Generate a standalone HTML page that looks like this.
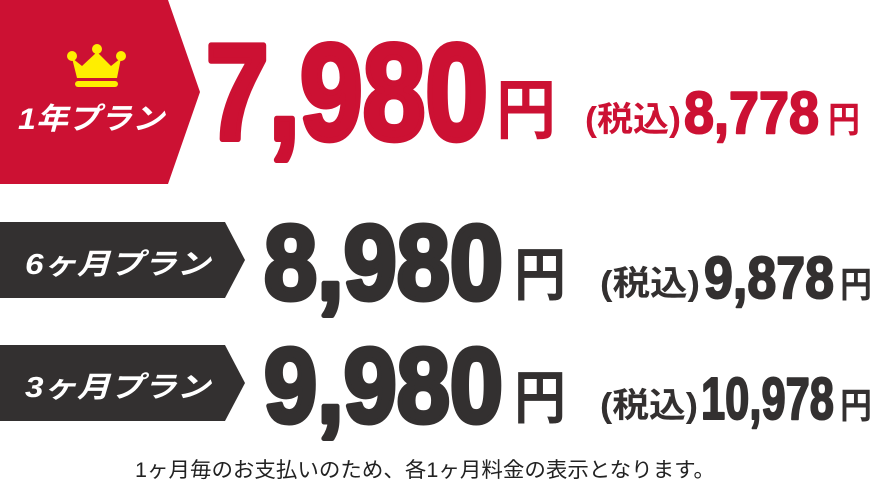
<!DOCTYPE html>
<html><head><meta charset="utf-8"><style>
html,body{margin:0;padding:0;background:#fff;}
svg{display:block}
</style></head><body>
<svg width="880" height="500" viewBox="0 0 880 500" xmlns="http://www.w3.org/2000/svg">
<polygon points="0,0 168,0 200,92 168,184 0,184" fill="#cc1133"/>
<g fill="#ffee00">
<circle cx="72" cy="56" r="5"/><circle cx="97" cy="49" r="5"/><circle cx="121" cy="56" r="5"/>
<polygon points="72,58 82,66 97,52 111,66 121,58 117,78 77,78"/>
<rect x="75" y="81" width="43" height="6" rx="3"/>
</g>
<polygon points="0,222 225,222 245,260 225,298 0,298" fill="#333030"/>
<polygon points="0,345 225,345 245,383 225,421 0,421" fill="#333030"/>
<g font-family="Liberation Sans, Noto Sans CJK JP, sans-serif" font-style="italic" font-weight="bold" fill="#fff">
<text x="18" y="129" font-size="30" textLength="146" lengthAdjust="spacingAndGlyphs">1年プラン</text>
<text x="25" y="274" font-size="29" textLength="185" lengthAdjust="spacingAndGlyphs">6ヶ月プラン</text>
<text x="25" y="397" font-size="29" textLength="185" lengthAdjust="spacingAndGlyphs">3ヶ月プラン</text>
</g>
<g font-family="Liberation Sans, sans-serif" font-weight="bold" stroke-linejoin="round">
<text x="206" y="139" font-size="136" fill="#cc1133" stroke="#cc1133" stroke-width="6" textLength="282" lengthAdjust="spacingAndGlyphs">7,980</text>
<text x="264" y="299" font-size="106" fill="#333030" stroke="#333030" stroke-width="5" textLength="239" lengthAdjust="spacingAndGlyphs">8,980</text>
<text x="264" y="422" font-size="106" fill="#333030" stroke="#333030" stroke-width="5" textLength="239" lengthAdjust="spacingAndGlyphs">9,980</text>
<text x="684" y="133" font-size="59" fill="#cc1133" stroke="#cc1133" stroke-width="2" textLength="135" lengthAdjust="spacingAndGlyphs">8,778</text>
<text x="704" y="298" font-size="59" fill="#333030" stroke="#333030" stroke-width="2" textLength="130" lengthAdjust="spacingAndGlyphs">9,878</text>
<text x="701" y="419" font-size="59" fill="#333030" stroke="#333030" stroke-width="2" textLength="133" lengthAdjust="spacingAndGlyphs">10,978</text>
</g>
<g font-family="Liberation Sans, Noto Sans CJK JP, sans-serif" font-weight="bold">
<text x="496" y="133" font-size="66" fill="#cc1133" textLength="60" lengthAdjust="spacingAndGlyphs">円</text>
<text x="514" y="295" font-size="58" fill="#333030" textLength="52" lengthAdjust="spacingAndGlyphs">円</text>
<text x="514" y="418" font-size="58" fill="#333030" textLength="52" lengthAdjust="spacingAndGlyphs">円</text>
<text x="828" y="132" font-size="36" fill="#cc1133" textLength="32" lengthAdjust="spacingAndGlyphs">円</text>
<text x="840" y="297" font-size="36" fill="#333030" textLength="32" lengthAdjust="spacingAndGlyphs">円</text>
<text x="840" y="418" font-size="36" fill="#333030" textLength="32" lengthAdjust="spacingAndGlyphs">円</text>
<text x="585" y="131" font-size="34" fill="#cc1133" textLength="96" lengthAdjust="spacingAndGlyphs">(税込)</text>
<text x="600" y="295" font-size="34" fill="#333030" textLength="100" lengthAdjust="spacingAndGlyphs">(税込)</text>
<text x="600" y="417" font-size="34" fill="#333030" textLength="98" lengthAdjust="spacingAndGlyphs">(税込)</text>
</g>
<text x="135" y="477" font-family="Liberation Sans, Noto Sans CJK JP, sans-serif" font-size="21" fill="#222" textLength="580" lengthAdjust="spacingAndGlyphs">1ヶ月毎のお支払いのため、各1ヶ月料金の表示となります。</text>
</svg>
</body></html>
